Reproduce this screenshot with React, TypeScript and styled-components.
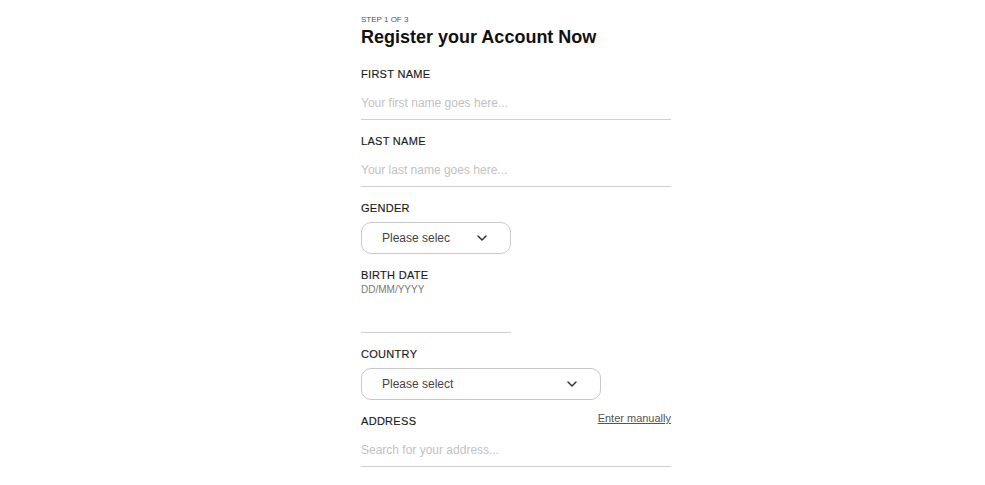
import { createGlobalStyle } from 'styled-components';
import styled from 'styled-components';

const GlobalStyle = createGlobalStyle`
  body {
    margin: 0;
    background: #fff;
    font-family: 'Liberation Sans', Arial, sans-serif;
  }
`;

const Page = styled.div`
  padding: 15px 0 0 361px;
`;

const Form = styled.form`
  width: 310px;
  display: flex;
  flex-direction: column;
`;

const Step = styled.div`
  font-size: 8px;
  line-height: 10px;
  color: #555;
`;

const Title = styled.h1`
  margin: 1px 0 19px;
  font-size: 18px;
  line-height: 22px;
  font-weight: 700;
  color: #111;
`;

const Field = styled.div`
  display: flex;
  flex-direction: column;
  margin-bottom: 14px;
`;

const LabelRow = styled.div`
  display: flex;
  justify-content: space-between;
  align-items: flex-start;
`;

const Label = styled.label`
  font-size: 11px;
  line-height: 14px;
  color: #1a1a1a;
  letter-spacing: 0.3px;
  -webkit-text-stroke: 0.15px #1a1a1a;
`;

const Hint = styled.div`
  font-size: 10px;
  line-height: 11px;
  color: #777;
  margin-top: 2px;
`;

const Link = styled.a`
  margin-top: -2px;
  font-size: 11px;
  line-height: 12px;
  color: #555;
  text-decoration: underline;
  cursor: pointer;
`;

const TextInput = styled.input<{ $width?: number; $gap?: number }>`
  box-sizing: border-box;
  width: ${p => (p.$width ? `${p.$width}px` : '100%')};
  height: 32px;
  margin-top: ${p => p.$gap ?? 7}px;
  padding: 0 0 2px;
  border: none;
  border-bottom: 1px solid #cfcfcf;
  outline: none;
  font-family: inherit;
  font-size: 12px;
  color: #222;
  background: transparent;

  &::placeholder {
    color: #c2c2c2;
  }
`;

// fixed-width pill; the text is clipped (no ellipsis) when it does not fit
const Select = styled.div<{ $width: number }>`
  box-sizing: border-box;
  width: ${p => p.$width}px;
  height: 32px;
  margin-top: 7px;
  padding: 0 22px 0 20px;
  border: 1px solid #c9c9c9;
  border-radius: 10px;
  display: flex;
  align-items: center;
  font-size: 12px;
  color: #444;
  cursor: pointer;
`;

const SelectText = styled.span`
  flex: 1;
  overflow: hidden;
  white-space: nowrap;
  margin-right: 26px;
`;

const Chevron = () => (
  <svg width='12' height='12' viewBox='0 0 12 12' fill='none'>
    <path d='M2 4l4 4 4-4' stroke='#333' strokeWidth='1.5' strokeLinecap='round' strokeLinejoin='round' />
  </svg>
);

export default function App() {
  return (
    <Page>
      <GlobalStyle />
      <Form>
        <Step>STEP 1 OF 3</Step>
        <Title>Register your Account Now</Title>

        <Field>
          <Label>FIRST NAME</Label>
          <TextInput placeholder='Your first name goes here...' />
        </Field>

        <Field>
          <Label>LAST NAME</Label>
          <TextInput placeholder='Your last name goes here...' />
        </Field>

        <Field>
          <Label>GENDER</Label>
          <Select $width={150}>
            <SelectText>Please select</SelectText>
            <Chevron />
          </Select>
        </Field>

        <Field>
          <Label>BIRTH DATE</Label>
          <Hint>DD/MM/YYYY</Hint>
          <TextInput $width={150} $gap={6} />
        </Field>

        <Field>
          <Label>COUNTRY</Label>
          <Select $width={240}>
            <SelectText>Please select</SelectText>
            <Chevron />
          </Select>
        </Field>

        <Field>
          <LabelRow>
            <Label>ADDRESS</Label>
            <Link>Enter manually</Link>
          </LabelRow>
          <TextInput placeholder='Search for your address...' />
        </Field>
      </Form>
    </Page>
  );
}
